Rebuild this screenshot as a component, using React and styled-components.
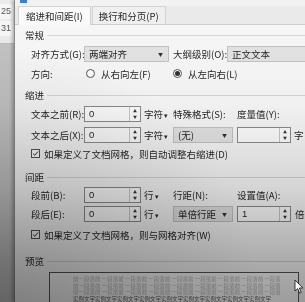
import React from "react";
import styled, { createGlobalStyle } from "styled-components";

const Global = createGlobalStyle`
  html, body { margin: 0; padding: 0; background: #d8d8d8; }
  body { font-family: "Noto Sans CJK SC", "Noto Sans", sans-serif; }
`;

const Screen = styled.div`
  position: relative;
  width: 305px;
  height: 302px;
  overflow: hidden;
  display: flex;
  filter: blur(0.35px);
`;

const DocStrip = styled.div`
  width: 14px;
  flex-shrink: 0;
  display: flex;
  flex-direction: column;
  background: #c4c4c4;
`;

const DocTop = styled.div`
  height: 44px;
  background: #ececec;
  border-bottom: 1px solid #bdbdbd;
  display: flex;
  flex-direction: column;
  gap: 2px;
  padding-top: 4px;
  box-sizing: border-box;
`;

const PageNum = styled.div`
  width: 13px;
  height: 15px;
  background: #f7f7f7;
  font-size: 9px;
  line-height: 15px;
  color: #555;
  font-family: "Liberation Sans", sans-serif;
  padding-left: 1px;
  box-sizing: border-box;
`;

const Dialog = styled.div`
  flex: 1;
  display: flex;
  flex-direction: column;
  background: #ebebeb;
  border-left: 1px solid #8a8a8a;
  box-shadow: -2px 0 3px rgba(0, 0, 0, 0.25);
  font-size: 9.5px;
  color: #262626;
`;

const TitleBar = styled.div`
  height: 11px;
  padding-left: 5px;
  background: #f2f2f2;
`;

const AppIcon = styled.div`
  width: 7px;
  height: 3px;
  background: #3b7fd4;
`;

const TabStrip = styled.div`
  height: 19px;
  display: flex;
  align-items: flex-end;
  padding-left: 3px;
  gap: 1px;
  border-bottom: 1px solid #cfcfcf;
`;

const Tab = styled.div`
  height: ${(p) => (p.$active ? "19px" : "18px")};
  padding: 0 ${(p) => (p.$active ? "7px" : "6px")};
  display: flex;
  align-items: center;
  background: ${(p) => (p.$active ? "#fbfbfb" : "#f0f0f0")};
  border: 1px solid #d3d3d3;
  border-bottom: none;
  box-sizing: border-box;
  margin-bottom: ${(p) => (p.$active ? "-1px" : "0")};
  white-space: nowrap;
`;

const Panel = styled.div`
  flex: 1;
  background: #f8f8f8;
  padding: 3px 0 0 10px;
  display: flex;
  flex-direction: column;
`;

const Heading = styled.div`
  display: flex;
  align-items: center;
  gap: 3px;
  height: 14px;
  margin-top: ${(p) => p.$top || 0}px;
  &::after {
    content: "";
    flex: 1;
    height: 1px;
    background: #d6d6d6;
  }
`;

const Row = styled.div`
  display: flex;
  align-items: center;
  height: 17px;
  margin-top: ${(p) => p.$top || 0}px;
  padding-left: 6px;
  white-space: nowrap;
`;

const Cell = styled.div`
  width: ${(p) => p.$w}px;
  flex-shrink: 0;
  display: flex;
  align-items: center;
  gap: 3px;
  padding-left: ${(p) => p.$pad || 0}px;
  box-sizing: border-box;
`;

const Select = styled.div`
  width: ${(p) => p.$w}px;
  height: 16px;
  box-sizing: border-box;
  background: #e4e4e4;
  border: 1px solid #c4c4c4;
  display: flex;
  align-items: center;
  justify-content: space-between;
  padding: 0 5px 0 4px;
  flex-shrink: 0;
  &::after {
    content: "${(p) => (p.$noArrow ? "" : "▼")}";
    font-size: 5px;
    color: #333;
  }
`;

const Spin = styled.div`
  width: ${(p) => p.$w}px;
  height: 16px;
  box-sizing: border-box;
  background: #fff;
  border: 1px solid #8c8c8c;
  display: flex;
  align-items: stretch;
  flex-shrink: 0;
`;

const SpinValue = styled.div`
  flex: 1;
  padding-left: 4px;
  display: flex;
  align-items: center;
  font-family: "Liberation Sans", sans-serif;
`;

const SpinButtons = styled.div`
  width: 10px;
  border-left: 1px solid #c8c8c8;
  display: flex;
  flex-direction: column;
  align-items: center;
  justify-content: center;
  font-size: 4px;
  line-height: 6px;
  color: #333;
`;

const Unit = styled.span`
  &::after {
    content: "▾";
    font-size: 7px;
    margin-left: 1px;
  }
`;

const Radio = styled.span`
  width: 9px;
  height: 9px;
  border: 1px solid #555;
  border-radius: 50%;
  background: #fff;
  box-sizing: border-box;
  display: inline-flex;
  align-items: center;
  justify-content: center;
  margin-right: 3px;
  &::after {
    content: "";
    width: 5px;
    height: 5px;
    border-radius: 50%;
    background: ${(p) => (p.$on ? "#333" : "transparent")};
  }
`;

const Check = styled.span`
  width: 9px;
  height: 9px;
  border: 1px solid #555;
  background: #fff;
  box-sizing: border-box;
  display: inline-flex;
  align-items: center;
  justify-content: center;
  margin-right: 4px;
`;

const PreviewBox = styled.div`
  margin: 4px 0 0 24px;
  width: 250px;
  flex: 1;
  border: 1px solid #555;
  border-bottom: none;
  background: #fdfdfd;
  padding: 3px 0 0 23px;
  box-sizing: border-box;
  overflow: hidden;
`;

const PreviewLine = styled.div`
  font-size: 5.5px;
  line-height: 6.5px;
  white-space: pre;
  color: ${(p) => (p.$dark ? "#5a5a5a" : "#b6b6b6")};
  font-family: "Noto Sans CJK SC", serif;
`;

const Vignette = styled.div`
  position: absolute;
  inset: 0;
  pointer-events: none;
  background:
    radial-gradient(ellipse at 0% 100%, rgba(0, 0, 0, 0.18) 0%, rgba(0, 0, 0, 0) 60%),
    linear-gradient(to bottom, rgba(0, 0, 0, 0) 0%, rgba(0, 0, 0, 0.03) 35%, rgba(0, 0, 0, 0.14) 62%, rgba(0, 0, 0, 0.3) 85%, rgba(0, 0, 0, 0.38) 100%);
`;

const Cursor = styled.svg`
  position: absolute;
  left: 294px;
  top: 279px;
`;

const CheckMark = () => (
  <svg width="7" height="7" viewBox="0 0 7 7">
    <path d="M1 3.6 L2.8 5.3 L6 1.5" fill="none" stroke="#333" strokeWidth="1" />
  </svg>
);

const SpinBox = ({ w, value }) => (
  <Spin $w={w}>
    <SpinValue>{value}</SpinValue>
    <SpinButtons>
      <span>▲</span>
      <span>▼</span>
    </SpinButtons>
  </Spin>
);

const prevText = "前一段落前 一段落前 一段落前 一段落前 一段落前 一段落前 一段落前 一段落前 一段落";
const sampleText = "实例文字实例文字实例文字实例文字实例文字实例文字实例文字实例文字实例文字";

export default function App() {
  return (
    <>
      <Global />
      <Screen>
        <DocStrip>
          <DocTop>
            <PageNum>25</PageNum>
            <PageNum>31</PageNum>
          </DocTop>
        </DocStrip>
        <Dialog>
          <TitleBar>
            <AppIcon />
          </TitleBar>
          <TabStrip>
            <Tab $active>缩进和间距(I)</Tab>
            <Tab>换行和分页(P)</Tab>
          </TabStrip>
          <Panel>
            <Heading>常规</Heading>
            <Row $top={3}>
              <Cell $w={53}>对齐方式(G):</Cell>
              <Select $w={85}>两端对齐</Select>
              <Cell $w={58} $pad={4}>大纲级别(O):</Cell>
              <Select $w={90} $noArrow>正文文本</Select>
            </Row>
            <Row $top={3}>
              <Cell $w={55}>方向:</Cell>
              <Cell $w={87}>
                <Radio />
                从右向左(F)
              </Cell>
              <Cell $w={80}>
                <Radio $on />
                从左向右(L)
              </Cell>
            </Row>

            <Heading $top={6}>缩进</Heading>
            <Row $top={3}>
              <Cell $w={53}>文本之前(R):</Cell>
              <SpinBox w={57} value="0" />
              <Cell $w={32} $pad={3}>
                <Unit>字符</Unit>
              </Cell>
              <Cell $w={64}>特殊格式(S):</Cell>
              <Cell $w={60}>度量值(Y):</Cell>
            </Row>
            <Row $top={4}>
              <Cell $w={53}>文本之后(X):</Cell>
              <SpinBox w={57} value="0" />
              <Cell $w={32} $pad={3}>
                <Unit>字符</Unit>
              </Cell>
              <Select $w={60}>(无)</Select>
              <Cell $w={4} />
              <SpinBox w={54} value="" />
              <Cell $w={14} $pad={3}>字</Cell>
            </Row>
            <Row $top={2}>
              <Check>
                <CheckMark />
              </Check>
              如果定义了文档网格，则自动调整右缩进(D)
            </Row>

            <Heading $top={8}>间距</Heading>
            <Row $top={2}>
              <Cell $w={53}>段前(B):</Cell>
              <SpinBox w={57} value="0" />
              <Cell $w={32} $pad={3}>
                <Unit>行</Unit>
              </Cell>
              <Cell $w={64}>行距(N):</Cell>
              <Cell $w={60}>设置值(A):</Cell>
            </Row>
            <Row $top={2}>
              <Cell $w={53}>段后(E):</Cell>
              <SpinBox w={57} value="0" />
              <Cell $w={32} $pad={3}>
                <Unit>行</Unit>
              </Cell>
              <Select $w={60}>单倍行距</Select>
              <Cell $w={4} />
              <SpinBox w={54} value="1" />
              <Cell $w={14} $pad={4}>倍</Cell>
            </Row>
            <Row $top={4}>
              <Check>
                <CheckMark />
              </Check>
              如果定义了文档网格，则与网格对齐(W)
            </Row>

            <Heading $top={11}>预览</Heading>
            <PreviewBox>
              <PreviewLine>{prevText}</PreviewLine>
              <PreviewLine>{prevText}</PreviewLine>
              <PreviewLine>{prevText}</PreviewLine>
              <PreviewLine $dark>{sampleText}</PreviewLine>
            </PreviewBox>
          </Panel>
        </Dialog>
        <Vignette />
        <Cursor width="10" height="16" viewBox="0 0 10 16">
          <path d="M1 1 L1 12 L3.6 9.6 L5.6 14.2 L7.2 13.5 L5.3 9 L8.8 9 Z" fill="#fff" stroke="#222" strokeWidth="0.9" />
        </Cursor>
      </Screen>
    </>
  );
}
